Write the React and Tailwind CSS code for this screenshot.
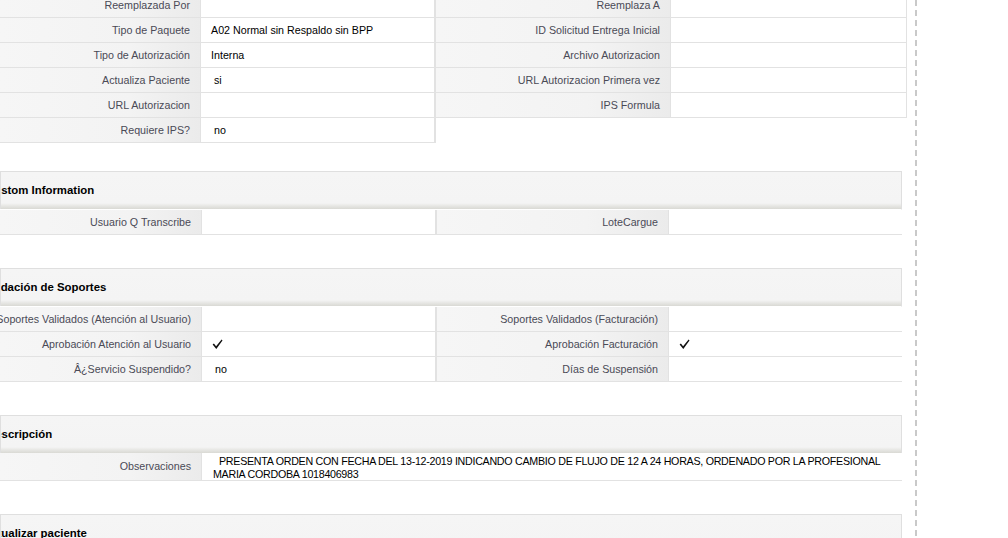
const labelBg =
  'bg-[linear-gradient(to_right,#f6f6f6_0%,#f3f3f3_65%,#ebebeb_100%)]';

function Label({ children, className = '' }) {
  return (
    <div
      className={`${labelBg} flex items-center justify-end pr-[10px] text-[10.7px] text-[#4a4a56] border-b border-r border-[#e2e2e2] whitespace-nowrap ${className}`}
    >
      {children}
    </div>
  );
}

function Value({ children, className = '' }) {
  return (
    <div
      className={`bg-white flex items-center pl-[10px] text-[10.7px] text-black border-b border-[#e2e2e2] whitespace-nowrap ${className}`}
    >
      {children}
    </div>
  );
}

function Check() {
  return (
    <svg width="11" height="11" viewBox="0 0 11 11">
      <path d="M0.6 5.6 L1.9 4.6 L4.1 7.2 L9.6 0.6 L10.5 1.4 L4.3 10 Z" fill="#111" />
    </svg>
  );
}

function Header({ title, offset }) {
  return (
    <div className="h-[38px] border border-b-0 border-[#dfdfdf] bg-[linear-gradient(to_bottom,#f5f5f5_0%,#f4f4f4_84%,#e6e6e3_92%,#d9d9d4_100%)] flex items-center overflow-hidden">
      <h3 className={`${offset} text-[11.4px] font-bold text-black whitespace-nowrap`}>{title}</h3>
    </div>
  );
}

function Section({ title, offset, rows }) {
  return (
    <div className="w-[902px]">
      <Header title={title} offset={offset} />
      <div className="grid grid-cols-[202px_235px_232px_233px] border-r border-t border-[#dfdfdf] border-t-white">
        {rows.map((r, i) => (
          <div key={i} className="contents">
            <Label className="h-[25px]">{r[0]}</Label>
            <Value className="h-[25px] border-r-2">{r[1]}</Value>
            <Label className="h-[25px]">{r[2]}</Label>
            <Value className="h-[25px]">{r[3]}</Value>
          </div>
        ))}
      </div>
    </div>
  );
}

export default function App() {
  const top = [
    ['Reemplazada Por', '', 'Reemplaza A', ''],
    ['Tipo de Paquete', 'A02 Normal sin Respaldo sin BPP', 'ID Solicitud Entrega Inicial', ''],
    ['Tipo de Autorización', 'Interna', 'Archivo Autorizacion', ''],
    ['Actualiza Paciente', <span className="pl-[3px]">si</span>, 'URL Autorizacion Primera vez', ''],
    ['URL Autorizacion', '', 'IPS Formula', ''],
  ];

  return (
    <div className="w-[1008px] h-[538px] overflow-hidden bg-white font-['Liberation_Sans',Arial,sans-serif] flex">
      <div className="w-[907px] shrink-0 flex flex-col">
        {/* first block, scrolled partly out of view */}
        <div className="-mt-[7px] grid grid-cols-[201px_235px_235px_236px]">
          {top.map((r, i) => (
            <div key={i} className="contents">
              <Label className="h-[25px]">{r[0]}</Label>
              <Value className="h-[25px] border-r-2">{r[1]}</Value>
              <Label className="h-[25px]">{r[2]}</Label>
              <Value className="h-[25px] border-r">{r[3]}</Value>
            </div>
          ))}
          <Label className="h-[25px]">Requiere IPS?</Label>
          <Value className="h-[25px] border-r-2">
            <span className="pl-[3px]">no</span>
          </Value>
        </div>

        <div className="mt-[28px] flex flex-col gap-[33px]">
          <Section
            title="Custom Information"
            offset="-ml-[15px]"
            rows={[['Usuario Q Transcribe', '', 'LoteCargue', '']]}
          />
          <Section
            title="Validación de Soportes"
            offset="-ml-[20px]"
            rows={[
              ['Soportes Validados (Atención al Usuario)', '', 'Soportes Validados (Facturación)', ''],
              ['Aprobación Atención al Usuario', <Check />, 'Aprobación Facturación', <Check />],
              ['Â¿Servicio Suspendido?', <span className="pl-[3px]">no</span>, 'Días de Suspensión', ''],
            ]}
          />
          <div className="w-[902px]">
            <Header title="Descripción" offset="-ml-[14px]" />
            <div className="grid grid-cols-[202px_700px] border-r border-[#dfdfdf]">
              <Label className="h-[28px]">Observaciones</Label>
              <div className="h-[28px] bg-white border-b border-[#e2e2e2] pl-[11px] pt-[2px] text-[10.7px] leading-[13px] tracking-[-0.28px] text-black whitespace-nowrap">
                <div className="pl-[6px]">PRESENTA ORDEN CON FECHA DEL 13-12-2019 INDICANDO CAMBIO DE FLUJO DE 12 A 24 HORAS, ORDENADO POR LA PROFESIONAL</div>
                <div>MARIA CORDOBA 1018406983</div>
              </div>
            </div>
          </div>
          <div className="w-[902px]">
            <Header title="Actualizar paciente" offset="-ml-[18px]" />
          </div>
        </div>
      </div>
      <div className="ml-[8px] w-[2px] h-full shrink-0 bg-[repeating-linear-gradient(to_bottom,#c9c9c9_0px,#c9c9c9_6px,transparent_6px,transparent_10px)]" />
      <div className="flex-1" />
    </div>
  );
}
